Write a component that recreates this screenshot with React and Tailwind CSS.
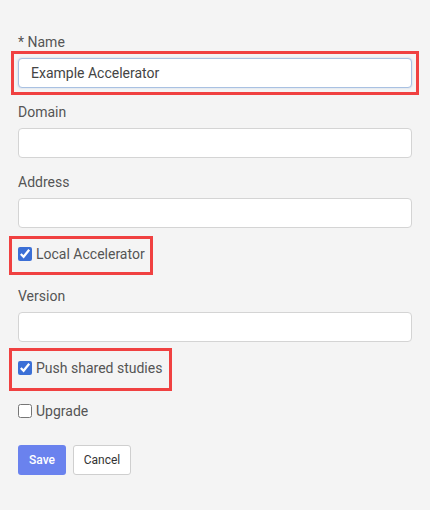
import { useState } from 'react';

const font = { fontFamily: 'Roboto, "Liberation Sans", sans-serif' };

function Field({ label, value = '', onChange, focused = false }) {
  return (
    <div className="flex flex-col">
      <label className="h-5 text-[14px] leading-5 text-[#555]">{label}</label>
      <input
        value={value}
        onChange={(e) => onChange && onChange(e.target.value)}
        className={
          'mt-[6px] h-[30px] w-full rounded-[4px] border bg-white px-3 text-[14px] text-[#444] outline-none ' +
          (focused ? 'border-[#a9c1e2] shadow-[0_0_2px_rgba(90,140,210,0.35)]' : 'border-[#d4d4d4]')
        }
      />
    </div>
  );
}

function Check({ label, checked, onChange }) {
  return (
    <label className="inline-flex h-6 items-center gap-[4px] text-[14px] text-[#555]">
      <input
        type="checkbox"
        checked={checked}
        onChange={(e) => onChange(e.target.checked)}
        className="m-0 h-[14px] w-[14px] accent-[#3b6fd6]"
      />
      {label}
    </label>
  );
}

export default function App() {
  const [nome, setNome] = useState('Example Accelerator');
  const [dominio, setDominio] = useState('');
  const [endereco, setEndereco] = useState('');
  const [versao, setVersao] = useState('');
  const [local, setLocal] = useState(true);
  const [push, setPush] = useState(true);
  const [upgrade, setUpgrade] = useState(false);

  return (
    <div className="min-h-[510px] w-[430px] bg-[#f4f4f4] px-[18px] pt-[32px]" style={font}>
      <div className="relative">
        <Field label="* Name" value={nome} onChange={setNome} focused />
        <span className="pointer-events-none absolute bottom-[-7px] left-[-7px] right-[-7px] top-[19px] border-[3px] border-[#f04141]" />
      </div>

      <div className="mt-[14px]">
        <Field label="Domain" value={dominio} onChange={setDominio} />
      </div>
      <div className="mt-[14px]">
        <Field label="Address" value={endereco} onChange={setEndereco} />
      </div>

      <div className="mt-[14px]">
        <div className="relative inline-flex">
          <Check label="Local Accelerator" checked={local} onChange={setLocal} />
          <span className="pointer-events-none absolute bottom-[-9px] left-[-9px] right-[-8px] top-[-6px] border-[3px] border-[#f04141]" />
        </div>
      </div>

      <div className="mt-[18px]">
        <Field label="Version" value={versao} onChange={setVersao} />
      </div>

      <div className="mt-[14px]">
        <div className="relative inline-flex">
          <Check label="Push shared studies" checked={push} onChange={setPush} />
          <span className="pointer-events-none absolute bottom-[-11px] left-[-9px] right-[-10px] top-[-8px] border-[3px] border-[#f04141]" />
        </div>
      </div>

      <div className="mt-[17px]">
        <Check label="Upgrade" checked={upgrade} onChange={setUpgrade} />
      </div>

      <div className="mt-[20px] flex gap-[7px]">
        <button type="button" className="h-[30px] w-[48px] rounded-[3px] bg-[#6a82ee] text-[12px] font-medium text-white">
          Save
        </button>
        <button type="button" className="h-[30px] w-[58px] rounded-[3px] border border-[#cfcfcf] bg-white text-[12px] text-[#333]">
          Cancel
        </button>
      </div>
    </div>
  );
}
